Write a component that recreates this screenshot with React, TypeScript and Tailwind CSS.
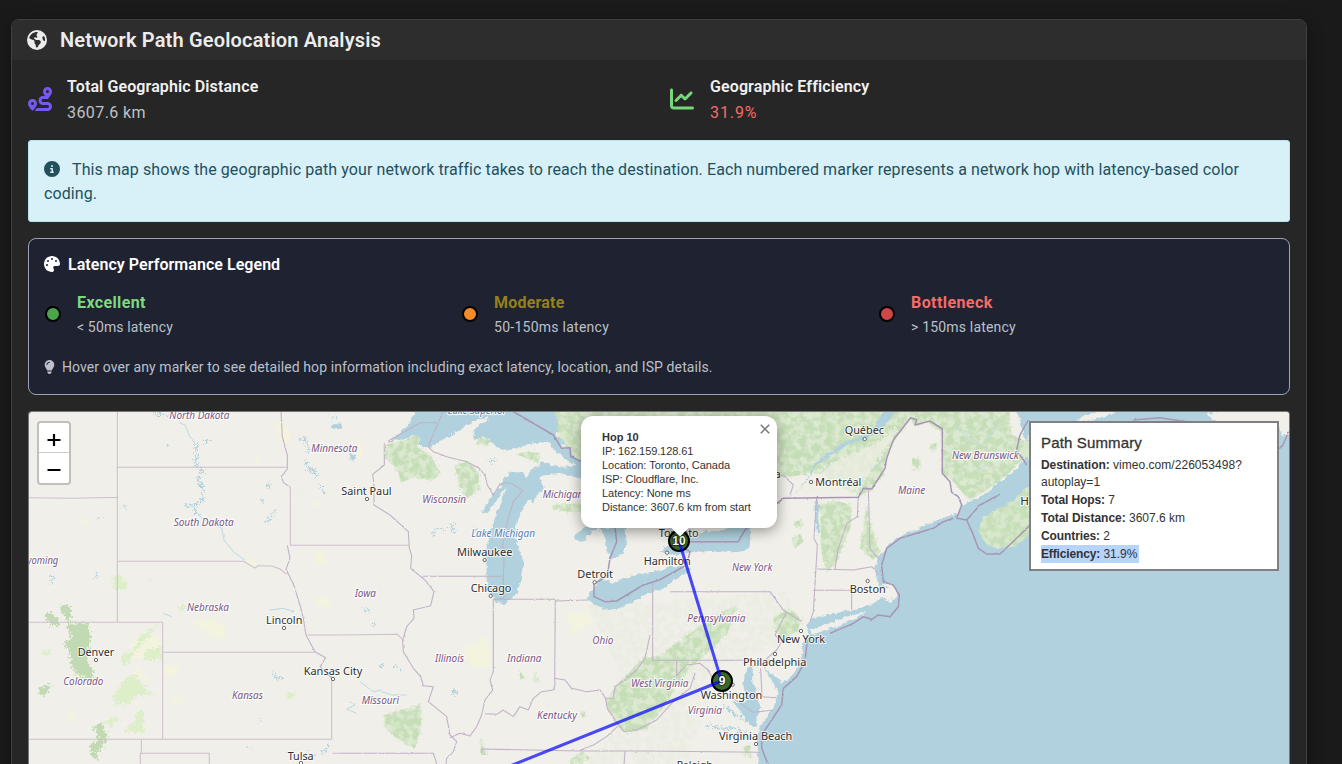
import React from "react";
import {
  FaEarthAmericas,
  FaRoute,
  FaChartLine,
  FaCircleInfo,
  FaPalette,
  FaLightbulb,
} from "react-icons/fa6";

type Label = [text: string, x: number, y: number, width: number];

/* Map units: three per pixel. Each label is [text, left, baseline, width]. */
const STATES: Label[] = [
  ["North Dakota", 448, 43, 180],
  ["Minnesota", 874, 140, 138],
  ["South Dakota", 461, 364, 180],
  ["Wyoming", -3, 476, 118],
  ["Nebraska", 501, 617, 126],
  ["Colorado", 130, 840, 120],
  ["Kansas", 636, 883, 93],
  ["Wisconsin", 1207, 293, 131],
  ["Michigan", 1568, 280, 122],
  ["Iowa", 1004, 575, 64],
  ["Illinois", 1245, 771, 87],
  ["Indiana", 1461, 771, 103],
  ["Ohio", 1717, 718, 63],
  ["Missouri", 1025, 898, 112],
  ["Kentucky", 1551, 943, 120],
  ["West Virginia", 1833, 847, 172],
  ["Maine", 2634, 266, 82],
  ["New York", 2136, 498, 121],
  ["New Brunswick", 2796, 163, 200],
  ["Pennsylvania", 2002, 650, 174],
  ["Virginia", 2003, 927, 103],
];

const CITIES: Label[] = [
  ["Saint Paul", 964, 271, 151],
  ["Milwaukee", 1311, 452, 166],
  ["Detroit", 1672, 518, 107],
  ["Chicago", 1352, 560, 122],
  ["Lincoln", 738, 656, 109],
  ["Denver", 173, 753, 110],
  ["Kansas City", 851, 810, 176],
  ["Tulsa", 803, 1064, 78],
  ["Québec", 2474, 88, 118],
  ["Montréal", 2386, 242, 138],
  ["Ottawa", 2174, 219, 108],
  ["Toronto", 1916, 395, 120],
  ["Hamilton", 1871, 479, 141],
  ["Boston", 2489, 563, 108],
  ["New York", 2271, 713, 144],
  ["Philadelphia", 2169, 783, 190],
  ["Washington", 2042, 882, 185],
  ["Virginia Beach", 2097, 1005, 220],
  ["Halifax", 3001, 300, 114],
  ["Raleigh", 1970, 1092, 108],
];

const CITY_DOTS: [number, number][] = [
  [1041, 282], [1394, 465], [1724, 532], [1412, 573], [792, 669], [228, 765],
  [939, 822], [843, 1074], [2534, 102], [2373, 231], [1941, 443], [2543, 528],
  [2343, 678], [2265, 747], [2138, 839], [2208, 1017],
];

const LAKES = [
  /* Superior */
  "M1105 108L1125 95L1160 65L1195 8H1598L1615 50L1610 90L1632 115L1625 130L1650 128L1655 150L1690 172V190L1650 172L1600 134L1590 110L1560 112L1520 118L1490 130L1460 137L1430 125L1410 105L1390 95L1365 105L1358 90L1370 65L1390 50L1407 42L1400 38L1370 45L1345 58L1330 68L1295 90L1260 110L1230 128L1190 120L1200 98L1190 88L1160 100L1135 105Z",
  /* Michigan */
  "M1690 178L1630 185L1600 183L1570 170L1550 180L1530 200L1520 218L1505 203L1470 200L1455 220L1440 245L1422 268L1405 290L1385 320L1400 325L1418 302L1440 270L1460 245L1450 280L1435 310L1425 340L1415 370L1405 400L1398 440L1400 480L1400 525L1408 560L1424 584L1436 595L1452 597L1475 580L1492 560L1505 525L1510 490L1507 450L1490 420L1484 385L1490 350L1504 320L1518 296L1530 280L1538 298L1548 272L1562 262L1570 248L1588 225L1605 205L1650 212L1690 222Z",
  /* Huron */
  "M1664 390L1672 409L1688 410L1704 392L1735 368H1815L1818 420L1808 445L1790 460L1768 462L1765 445L1755 410L1750 384L1740 370L1700 362Z",
  /* Erie */
  "M1698 585L1725 545L1742 522L1780 534L1820 520L1860 506L1905 500L1950 484L2005 485L2010 496L1980 512L1945 540L1918 556L1880 565L1840 590L1800 610L1762 616L1722 598Z",
  /* Ontario */
  "M1920 440L1935 425L1960 412L2020 392L2060 378L2100 382L2125 366L2190 366L2195 400L2185 436L2140 442L2080 437L2020 442L1960 450Z",
  /* Champlain */
  "M2390 275L2398 290L2394 345L2400 380L2392 395L2388 360L2384 310Z",
];

const ATLANTIC =
  "M2965 -20L3000 40L3010 90L3030 140L2990 190L2940 230L2910 255L2880 275L2850 290L2825 300L2815 325L2780 335L2740 350L2700 370L2660 385L2630 400L2600 425L2575 460L2565 490L2570 520L2575 537L2580 549L2610 552L2622 570L2608 584L2585 577L2570 592L2520 612L2480 618L2430 628L2380 640L2360 662L2365 687L2350 717L2345 757L2335 787L2315 812L2290 832L2275 852L2270 877L2260 912L2240 937L2220 967L2210 997L2215 1047L2225 1180H3920V-20Z";

const BAYS = [
  "M2178 790L2200 780L2196 825L2212 865L2222 905L2210 945L2205 965L2180 950L2160 915L2140 890L2180 893L2170 840Z",
  "M2235 790L2262 810L2288 835L2280 852L2268 845L2248 818Z",
];

const ISLANDS = [
  "M2370 676L2430 654L2490 632L2540 620L2500 645L2430 670L2378 688Z",
  "M2580 538L2605 533L2628 548L2632 575L2612 590L2585 588L2608 582L2618 565L2605 550Z",
  "M3560 30L3580 25L3640 8H3860V60L3790 95L3770 60L3745 75L3700 60L3670 75L3650 50L3610 62Z",
  "M3170 42L3220 20L3290 18L3240 40L3180 50Z",
];

const NOVA_SCOTIA =
  "M2950 305L2985 285L3010 255L3060 240L3150 230V290L3080 345L3030 385L2985 425L2925 430L2895 415L2875 375L2885 345L2920 318Z";

const PRINCE_EDWARD = "M3000 140L3035 75L3060 85L3090 70V170L3040 180Z";

const FOREST = [
  "M1598 -10H2965L2975 90L3020 110L3020 150L2960 210L2900 255L2850 285L2800 230L2765 205V80L2720 50L2680 60L2672 38L2630 95L2600 150L2590 210L2550 255L2515 275L2400 205L2300 215L2200 190L2100 200L1800 160L1690 172L1655 150L1632 120L1612 90Z",
  "M1095 120L1155 105L1195 88L1200 98L1190 125L1230 150L1262 205L1235 228L1180 215L1145 232L1130 190L1095 160Z",
  "M1305 180L1345 170L1375 205L1378 255L1340 280L1315 240Z",
  "M1365 105L1390 95L1412 108L1400 122L1372 118Z",
  "M1490 148L1520 140L1560 145L1555 175L1520 160Z",
  "M1595 300L1680 295L1690 318L1640 320L1600 312Z",
  "M1092 930L1140 915L1200 900L1205 960L1185 1030L1160 1020L1120 990L1095 970Z",
  "M1755 890L1790 840L1830 800L1870 760L1920 750L1990 700L2070 640L2150 600L2120 690L2060 745L2010 790L1960 860L1920 920L1880 970L1820 985L1790 960Z",
  "M2260 640L2310 610L2345 645L2330 680L2290 700L2265 680Z",
  "M2400 300L2440 285L2495 300L2490 370L2450 470L2420 500L2405 450Z",
  "M2540 300L2555 370L2580 440L2560 465L2520 430L2530 370Z",
  "M2315 400L2340 385L2350 410L2325 430Z",
  "M2320 350L2345 345L2355 360L2330 370Z",
  "M2675 160H2698V195H2680Z",
  "M2730 115H2750V135H2732Z",
  "M1655 1060L1690 1040L1710 1060L1685 1077H1650Z",
  "M1680 925L1700 915L1690 940Z",
  "M1380 1000L1388 1005L1390 1030L1400 1050L1385 1050Z",
  "M1500 800L1515 820L1500 830ZM1540 800L1560 830L1545 835Z",
  "M2170 1025L2190 1020L2195 1060L2175 1050Z",
];

const ROCKIES = [
  "M68 630L90 622L115 640L120 665L95 660Z",
  "M118 602L150 600L155 640L140 655Z",
  "M140 660L200 650L212 700L200 760L225 810L215 822L180 812L155 790L150 740L130 715L155 700Z",
  "M55 850L90 840L88 865L60 870Z",
  "M218 965L245 950L262 1000L235 1040L230 1065L212 1050L210 1020L235 1005Z",
];

const MEADOW = [
  "M275 515L300 510L325 540L315 555L280 550Z",
  "M470 602L500 600L498 616H475Z",
  "M310 745L340 735L360 690L420 655L390 690L350 735L320 780L300 770Z",
  "M370 735L425 725L425 765H375Z",
  "M310 825L340 808L385 860L410 870L350 870L330 895L285 900L280 880Z",
  "M310 980L345 950L350 920L370 915L372 985L345 982Z",
  "M255 950L285 935L300 945L270 965Z",
  "M55 745L88 728L85 755Z",
  "M790 870L830 860L815 885Z",
  "M380 525H395V535ZM815 252L850 272L835 266Z",
  "M160 800L210 810L220 830L165 820Z",
];

const FARMLAND = [
  "M765 50L800 65L812 110L780 105Z",
  "M700 165L718 155L720 180L703 178Z",
  "M670 460L705 462L710 485L690 485Z",
  "M340 700L420 690L425 760L330 760Z",
  "M425 780L472 782V810L428 812Z",
  "M460 875H490V893H460Z",
  "M580 640L615 670L615 705L560 685L520 650Z",
  "M883 440H915V475H883Z",
  "M185 330L205 345L190 360Z",
  "M140 930L165 925L162 950H142Z",
  "M1010 110L1030 120L1022 175L1010 160Z",
  "M1330 730L1400 700L1415 790L1350 780Z",
  "M1640 630L1700 620L1720 650L1660 690Z",
  "M885 580L940 580L920 605L888 600Z",
  "M880 290H900V305H880Z",
  "M350 780L390 830L340 810Z",
];

const SHORE_DETAIL = [
  "M528 120L530 165L525 185L545 195L540 215L530 218L548 240L550 270L545 285L530 300L497 302M530 300L524 312L535 330M530 240L548 242",
  "M400 22L420 25L445 32M435 120L445 122M550 112L572 106",
  "M740 240L752 235M745 250L750 245M725 290L732 285M755 325L770 320M740 345L755 335L742 355",
  "M840 105L855 100L865 140M855 165L875 205M860 195L880 190L890 215M928 40L945 35M915 270L900 240",
  "M90 515L98 515L94 535M225 510L232 516M235 340L242 341M312 303L318 307",
  "M1030 608L1050 618M1120 782L1138 788M1295 865L1304 850M1310 858L1295 868M1080 785L1090 780M1055 665L1060 655",
  "M765 800L770 822L790 818M712 940L720 948M905 1045L920 1030L930 1020M870 1045L882 1055M688 1025L695 1028",
  "M1300 350L1295 375L1310 385M1250 370L1280 375M1238 390L1245 380M1405 170L1425 165M1360 372L1370 380",
  "M2180 950L2155 935L2130 915L2110 900M2178 985L2150 970L2110 970L2060 960M2190 1000L2150 990",
];

const STREAMS = [
  "M535 330L560 350L605 370L612 405L640 440L675 466",
  "M475 52L495 60L510 95L528 120",
  "M430 625L455 635M748 615L790 610L822 620",
  "M990 890L1005 900L980 912L1010 925M1085 860L1115 870L1160 870M1020 830L1060 860L1085 855",
  "M2400 205L2430 180L2400 150M2550 200L2590 160M2020 90L2060 60L2110 40M2050 140L2000 110M2120 80L2150 130",
  "M2800 60L2840 90L2900 130M2930 60L2900 110M2860 200L2900 180",
];

const STATE_BORDERS = [
  "M292 18V651M292 187H802M24 278L165 280L292 277M292 468L670 469L705 489L715 482L755 483L780 492L800 508M811 247V421H1168M24 652H428V1003M428 742H885M24 1003H935M364 1003V1045M361 1077V1045H568V1077M935 1003V822M938 1045H960M862 690H960L1133 688L1152 708",
  "M802 421L810 460L798 492L820 537L840 600L850 640L858 690L885 740L917 758L900 785L938 822",
  "M783 18L787 95L802 150V192L784 215L790 232L811 247",
  "M1105 108L1200 53H1252M1270 18L1224 125M1093 115L1093 180L1058 208L1062 240L1062 300L1110 330L1165 380L1168 430L1175 450L1172 490L1215 525L1242 560L1232 602L1180 615L1182 640L1160 665L1148 705L1150 740L1180 790L1202 815L1210 842L1240 845L1225 890L1280 935L1290 990L1310 1010L1300 1040L1280 1060L1278 1077",
  "M1208 514H1452M1105 112L1120 108M1224 125L1240 140L1280 155L1340 170L1375 188L1395 210L1402 240L1420 270L1438 240L1450 234H1472L1508 256L1480 290L1462 350L1448 420L1452 470L1450 515L1452 580L1420 583H1606M1420 583V800L1410 825L1418 855L1395 885L1385 930L1370 965L1350 993L1320 985L1290 998",
  "M1606 584L1604 820L1605 840L1600 855L1565 860L1540 880L1525 915L1500 905L1480 935L1450 915L1430 928L1395 926M1606 588L1700 585M1604 820L1635 825L1655 850L1700 860L1740 855L1757 880L1780 880L1785 845L1820 820L1850 795L1875 760L1890 690",
  "M1757 880L1762 910L1790 952L1812 980L1850 975L1910 945L1960 890L2010 850L2025 805M1792 965L1760 995L1720 1020L1680 1036M1384 1045V1032L1680 1038H1880L2220 1042M960 1045H1240L1250 1077M1815 1040L1812 1077",
  "M1898 537V766H2250M1970 766V812L2000 780L2040 775L2070 800M1950 560H2250L2290 615L2345 650M2300 620L2265 690L2285 710L2270 735L2230 770L2235 790",
  "M2390 275L2382 400L2392 420L2385 537L2380 620L2370 650M2392 492L2500 495L2555 485L2575 505M2380 556H2495V620M2515 275L2512 335L2480 355L2455 430L2445 490M2545 250L2550 430L2578 465M2222 790L2226 875L2270 878",
  "M2300 220L2320 240L2310 270M2060 790L2090 840L2140 880L2200 922L2260 915M2250 217L2260 205L2300 217",
];

const COUNTRY_BORDERS = [
  "M1477 18L1600 90L1625 130L1650 128L1652 155L1690 172",
  "M1785 368L1790 410L1770 460L1762 512L1722 537L1722 575L1755 590L1790 588L1870 540L1918 525L2000 480L2010 440L1960 410H2155L2175 375L2290 280L2515 277L2530 250L2555 252L2595 190L2600 160L2620 105L2672 38L2690 45L2685 60L2730 48L2767 72V205L2790 230L2795 262L2815 275L2825 300L2810 340L2840 345L2858 385L2875 430L2900 447L2940 447L3000 390L3050 340",
  "M2800 340L2770 350L2740 370L2690 385L2640 400L2600 430L2585 480L2590 530L2620 540L2638 570L2635 605L2610 635L2575 630L2555 643L2530 635L2500 655L2430 685M2362 705L2355 770L2330 815L2290 850L2285 900L2255 945L2225 990L2225 1030L2245 1080",
  "M3025 45L3000 90L2990 135L3020 180M2840 345L2880 300L2940 268M3340 45L3420 38L3500 50M3770 140L3790 118L3806 80",
];

const MapArtwork = () => (
  <svg
    viewBox="27 21 3780 1059"
    className="block h-[353px] w-[1260px]"
    preserveAspectRatio="none"
    fontFamily='"Noto Sans", sans-serif'
  >
    <defs>
      <filter id="ragged" x="-2%" y="-2%" width="104%" height="104%">
        <feTurbulence type="fractalNoise" baseFrequency="0.13" numOctaves="3" seed="4" result="n" />
        <feDisplacementMap in="SourceGraphic" in2="n" scale="34" xChannelSelector="R" yChannelSelector="G" />
      </filter>
      <filter id="coast" x="-2%" y="-2%" width="104%" height="104%">
        <feTurbulence type="fractalNoise" baseFrequency="0.07" numOctaves="3" seed="9" result="n" />
        <feDisplacementMap in="SourceGraphic" in2="n" scale="16" xChannelSelector="R" yChannelSelector="G" />
      </filter>
      <filter id="wobble" x="-2%" y="-2%" width="104%" height="104%">
        <feTurbulence type="fractalNoise" baseFrequency="0.1" numOctaves="2" seed="3" result="n" />
        <feDisplacementMap in="SourceGraphic" in2="n" scale="6" xChannelSelector="R" yChannelSelector="G" />
      </filter>
      <filter id="speckle" x="0" y="0" width="100%" height="100%">
        <feTurbulence type="fractalNoise" baseFrequency="0.05" numOctaves="5" seed="12" result="n" />
        <feColorMatrix in="n" type="matrix" values="0 0 0 0 0  0 0 0 0 0  0 0 0 0 0  4 0 0 0 -1.4" result="m" />
        <feComposite in="SourceGraphic" in2="m" operator="in" />
      </filter>
    </defs>

    <rect x="0" y="0" width="3820" height="1090" fill="#f0efe9" />
    <g filter="url(#ragged)">
      {FARMLAND.map((d) => <path key={d} d={d} fill="#f4f4de" />)}
      {MEADOW.map((d) => <path key={d} d={d} fill="#ddefc9" />)}
      {ROCKIES.map((d) => <path key={d} d={d} fill="#c1dab3" />)}
    </g>
    <g fill="#d6e7c9" opacity="0.75" filter="url(#ragged)">
      {FOREST.map((d) => <path key={d} d={d} />)}
    </g>
    <g fill="#c6deb8" filter="url(#speckle)">
      {FOREST.map((d) => <path key={d} d={d} />)}
      <path d="M1700 600L2300 560L2340 700L2100 780L2000 1077H1700L1850 900Z" opacity="0.12" />
    </g>
    <path
      d="M2630 60L2560 120L2480 150L2400 195L2310 260L2500 265L2560 190L2620 100Z"
      fill="#efefe4" opacity="0.75" filter="url(#ragged)"
    />

    <g fill="#b0d1dd" filter="url(#coast)">
      {LAKES.map((d) => <path key={d} d={d} />)}
      <path d={ATLANTIC} />
      {BAYS.map((d) => <path key={d} d={d} />)}
      <path d="M2640 8L2590 65L2555 95L2480 120L2430 155L2382 190L2360 230L2320 270L2300 280L2330 262L2362 222L2380 180L2425 145L2475 112L2545 88L2572 50L2595 8Z" />
      <path d="M1735 525L1745 515L1757 530L1745 538Z" />
      <path d="M990 145L1010 150L1005 170L992 165ZM935 60L960 55L965 72L940 72Z" />
    </g>
    <g fill="#f0efe9" filter="url(#coast)">
      {ISLANDS.map((d) => <path key={d} d={d} />)}
      <path d="M1545 178L1560 174L1558 186ZM1560 212L1600 208L1620 225L1600 250L1570 245Z" />
    </g>
    <g filter="url(#coast)" fill="#d9e8cd">
      <path d={NOVA_SCOTIA} />
      <path d={PRINCE_EDWARD} />
    </g>
    <path d={NOVA_SCOTIA} fill="#c6dfb8" filter="url(#speckle)" />
    <g fill="none" stroke="#b0d1dd" filter="url(#ragged)">
      {SHORE_DETAIL.map((d) => <path key={d} d={d} strokeWidth="5" />)}
    </g>
    <g fill="none" stroke="#bcd8e1" filter="url(#wobble)">
      {STREAMS.map((d) => <path key={d} d={d} strokeWidth="3" />)}
    </g>

    <g fill="none" stroke="#cfc0d0" strokeWidth="3.2" strokeLinejoin="round">
      <path d={STATE_BORDERS[0]} />
      <g filter="url(#wobble)" stroke="#c2b1c8">
        {STATE_BORDERS.slice(1).map((d) => <path key={d} d={d} />)}
      </g>
    </g>
    <g fill="none" stroke="#a896b5" strokeWidth="4.5" strokeLinejoin="round" filter="url(#wobble)">
      {COUNTRY_BORDERS.map((d) => <path key={d} d={d} />)}
    </g>

    <g fill="#fff" stroke="#555" strokeWidth="2.6">
      {CITY_DOTS.map(([x, y]) => <circle key={`${x}-${y}`} cx={x} cy={y} r="5" />)}
    </g>
    <g
      fontSize="30" fontStyle="italic" fill="#7c5787" stroke="#fff"
      strokeOpacity="0.75" strokeWidth="7" strokeLinejoin="round" paintOrder="stroke"
    >
      {STATES.map(([text, x, y, w]) => (
        <text key={text} x={x} y={y} textLength={w} lengthAdjust="spacingAndGlyphs">{text}</text>
      ))}
      <g fill="#5580b8">
        <text x="1283" y="26" textLength="176" lengthAdjust="spacingAndGlyphs">Lake Superior</text>
        <text x="1354" y="395" textLength="191" lengthAdjust="spacingAndGlyphs">Lake Michigan</text>
      </g>
    </g>
    <g
      fontSize="33" fill="#2e2e2e" stroke="#fff" strokeOpacity="0.75"
      strokeWidth="6" strokeLinejoin="round" paintOrder="stroke"
    >
      {CITIES.map(([text, x, y, w]) => (
        <text key={text} x={x} y={y} textLength={w} lengthAdjust="spacingAndGlyphs">{text}</text>
      ))}
    </g>
  </svg>
);

const HOPS = [
  { n: 10, x: 679, y: 541 },
  { n: 9, x: 722, y: 681 },
];

const RouteOverlay = () => (
  <svg
    viewBox="29 412 1260 353"
    className="absolute left-0 top-0 h-[353px] w-[1260px]"
    fontFamily='"Liberation Sans", sans-serif'
  >
    {HOPS.map((h) => (
      <circle key={h.n} cx={h.x} cy={h.y} r="10" fill="#38682c" stroke="#000" strokeWidth="2" />
    ))}
    <path
      d="M679 541L721.500 681L505 768" fill="none"
      stroke="#0000ff" strokeOpacity="0.7" strokeWidth="3" strokeLinejoin="round"
    />
    {HOPS.map((h) => (
      <text
        key={h.n} x={h.x} y={h.y + 4} textAnchor="middle" fontSize="12" fontWeight="700"
        fill="#fff" stroke="#000" strokeOpacity="0.6" strokeWidth="1.5" paintOrder="stroke"
      >
        {h.n}
      </text>
    ))}
  </svg>
);

const GeoMap = () => (
  <div className="relative mt-4 h-[354px] overflow-hidden rounded-t border-x border-t border-[#777] font-['Liberation_Sans',sans-serif] text-[#333]">
    <MapArtwork />
    <RouteOverlay />

    <div className="absolute left-[8px] top-[9px] w-[34px] rounded border-2 border-black/20 bg-white bg-clip-padding">
      <div className="flex h-[30px] items-center justify-center border-b border-[#ccc] pt-[4px]">
        <svg viewBox="0 0 14 14" className="size-[14px]"><path d="M.5 7h13M7 1v12" stroke="#000" strokeWidth="2.2" /></svg>
      </div>
      <div className="flex h-[30px] items-center justify-center pt-[3px]">
        <svg viewBox="0 0 14 14" className="size-[14px]"><path d="M.5 7h13" stroke="#000" strokeWidth="2.2" /></svg>
      </div>
    </div>

    <div className="absolute left-[642px] top-[107px] size-3 rotate-45 bg-white shadow-[0_3px_14px_rgba(0,0,0,0.4)]" />
    <div className="absolute left-[552px] top-[4px] h-[112px] w-[196px] rounded-xl bg-white px-[21px] pt-[14px] text-[11px] leading-[14px] shadow-[0_3px_14px_rgba(0,0,0,0.4)]">
      <div className="font-bold">Hop 10</div>
      <div className="tracking-[-0.1px]">IP: 162.159.128.61</div>
      <div className="tracking-[-0.03px]">Location: Toronto, Canada</div>
      <div className="tracking-[-0.06px]">ISP: Cloudflare, Inc.</div>
      <div>Latency: None ms</div>
      <div className="whitespace-nowrap tracking-[-0.03px]">Distance: 3607.6 km from start</div>
      <svg viewBox="0 0 10 10" className="absolute right-[7px] top-[8px] size-[10px]">
        <path d="M.8.8l8.400 8.400M9.200.8L.8 9.200" stroke="#757575" strokeWidth="1.500" />
      </svg>
    </div>
    <div className="absolute left-[645px] top-[110px] size-3 rotate-45 bg-white" />

    <div className="absolute left-[1000px] top-[9px] h-[150px] w-[250px] border-2 border-[#808080] bg-white px-[10px] pt-[10px] text-[12px]">
      <div className="mb-[5px] text-[15px] font-normal leading-[19px] tracking-[0.15px] [-webkit-text-stroke:0.3px_#333]">Path Summary</div>
      <div className="leading-[17px]"><b className="tracking-[-0.06px]">Destination:</b> <span className="tracking-[0.04px]">vimeo.com/226053498?</span><br />autoplay=1</div>
      <div className="leading-[18px]"><b className="tracking-[-0.1px]">Total Hops:</b> 7</div>
      <div className="leading-[18px]"><b className="tracking-[-0.03px]">Total Distance:</b> 3607.6 km</div>
      <div className="leading-[18px]"><b className="tracking-[-0.1px]">Countries:</b> 2</div>
      <div className="leading-[18px]"><span className="inline-block w-[98px] whitespace-nowrap bg-[#b7d4fd]"><b className="tracking-[-0.15px]">Efficiency:</b> 31.9%</span></div>
    </div>
  </div>
);

const LEGEND = [
  { name: "Excellent", range: "< 50ms latency", text: "text-[#7fd882]", dot: "bg-[#4ba64b]", track: "tracking-[0.38px]", sub: "tracking-[0.14px]" },
  { name: "Moderate", range: "50-150ms latency", text: "text-[#94811c]", dot: "bg-[#f58a27]", track: "tracking-[0.2px]", sub: "tracking-[0.26px]" },
  { name: "Bottleneck", range: "> 150ms latency", text: "text-[#f26d68]", dot: "bg-[#cf4747]", track: "tracking-[0.42px]", sub: "tracking-[0.18px]" },
];

export default function App() {
  return (
    <div className="h-[764px] overflow-hidden bg-[#1a1a1a] pl-[11px] pt-[19px] font-['Roboto',sans-serif]">
      <div className="h-[800px] w-[1296px] overflow-hidden rounded-lg border border-[#404040] bg-[#262626] shadow-[0_4px_16px_rgba(0,0,0,0.35)]">
        <header className="flex h-10 items-center bg-[#2d2d2d] pl-[15px] text-[#ececec]">
          <FaEarthAmericas className="mt-[-1px] size-5" />
          <h1 className="ml-[13px] text-[20px] font-semibold leading-6 tracking-[0.17px]">Network Path Geolocation Analysis</h1>
        </header>

        <div className="px-4">
          <div className="flex h-20 pt-[14px]">
            <div className="flex w-[642px] items-center self-start">
              <FaRoute className="mt-[-2px] size-6 text-[#7857f7]" />
              <div className="ml-[15px]">
                <div className="text-[16px] font-semibold leading-[25px] tracking-[0.11px] text-[#f0f0f0]">Total Geographic Distance</div>
                <div className="pt-px text-[16px] leading-[26px] tracking-[0.42px] text-[#bfc2c6]">3607.6 km</div>
              </div>
            </div>
            <div className="flex items-center self-start">
              <FaChartLine className="mt-[-2px] size-6 text-[#77d67b]" />
              <div className="ml-4">
                <div className="text-[16px] font-semibold leading-[25px] tracking-[0.11px] text-[#f0f0f0]">Geographic Efficiency</div>
                <div className="pt-px text-[16px] leading-[26px] tracking-[0.9px] text-[#f26d68]">31.9%</div>
              </div>
            </div>
          </div>

          <div className="h-[82px] rounded-[3px] border border-[#b8e2ee] bg-[#d8f0f8] px-[15px] pt-[17px] text-[16px] leading-6 text-[#22505d]">
            <FaCircleInfo className="mr-[12px] inline size-4 align-[-2px]" />
            <span className="tracking-[0.088px]">
              This map shows the geographic path your network traffic takes to reach the destination. Each numbered marker represents a network hop with latency-based color<br />coding.
            </span>
          </div>

          <div className="mt-4 h-[157px] rounded-lg border border-[#9aa3bb] bg-[#1e2231] px-[15px]">
            <div className="flex h-[50px] items-center pt-px text-white">
              <FaPalette className="mt-[-2px] size-4 shrink-0" />
              <h2 className="ml-2 text-[16px] font-semibold leading-6 tracking-[0.05px]">Latency Performance Legend</h2>
            </div>
            <div className="flex h-[50px]">
              {LEGEND.map((l) => (
                <div key={l.name} className="flex w-[417px] shrink-0 items-center">
                  <span className={`ml-px size-4 rounded-full border-2 border-black ${l.dot}`} />
                  <div className="ml-4 pt-[2px]">
                    <div className={`text-[16px] font-bold leading-[24px] ${l.text} ${l.track}`}>{l.name}</div>
                    <div className={`text-[14px] leading-[25px] text-[#bcc0c8] ${l.sub}`}>{l.range}</div>
                  </div>
                </div>
              ))}
            </div>
            <div className="mt-[17px] flex h-[22px] items-center text-[14px] text-[#bcc0c8]">
              <FaLightbulb className="h-[14px] w-[11px]" />
              <span className="ml-[7px] tracking-[0.095px]">Hover over any marker to see detailed hop information including exact latency, location, and ISP details.</span>
            </div>
          </div>

          <GeoMap />
        </div>
      </div>
    </div>
  );
}
